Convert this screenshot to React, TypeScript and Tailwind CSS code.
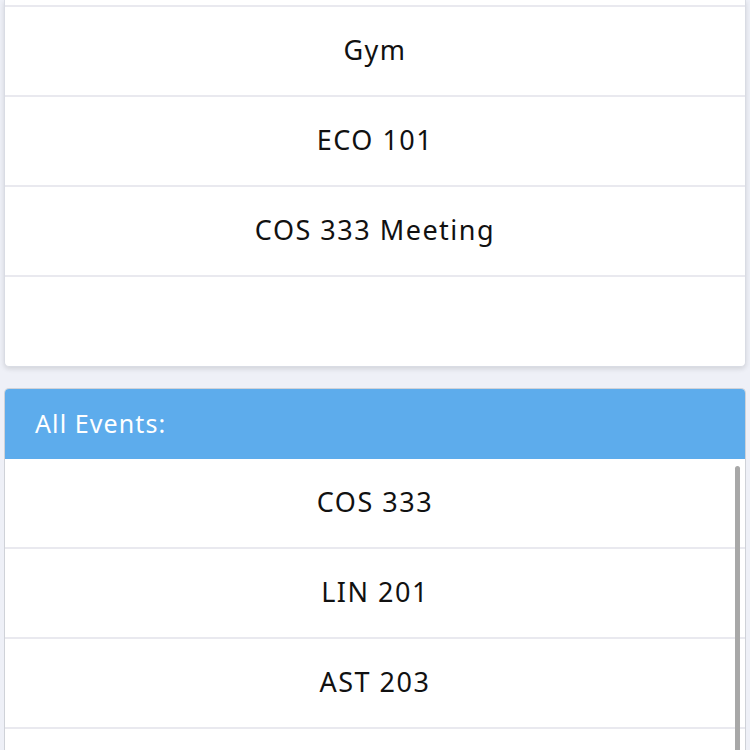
import React from "react";

const Row = ({ label }: { label: string }) => (
  <div className="h-[90px] border-b-2 border-[#e9e9ef] flex items-center justify-center pb-[1px] text-[27px] tracking-[1.5px] text-[#111]">
    {label}
  </div>
);

export default function App() {
  return (
    <div className="h-[750px] overflow-hidden bg-[#eef0f7] px-[4px] font-['Noto_Sans',sans-serif]">
      <div className="bg-white rounded-b-[5px] border-x border-b border-[#d9dce4] shadow-[0_2px_5px_rgba(0,0,0,0.12)]">
        <div className="h-[7px] border-b-2 border-[#e9e9ef]" />
        <Row label="Gym" />
        <Row label="ECO 101" />
        <Row label="COS 333 Meeting" />
        <div className="h-[89px]" />
      </div>
      <div className="mt-[21px] relative bg-white rounded-t-[5px] border-x border-t border-[#cfd2d8]">
        <div className="h-[70px] bg-[#5dacec] rounded-t-[4px] flex items-center pl-[30px] pb-[1px] text-white text-[25px] tracking-[1.1px]">
          All Events:
        </div>
        <Row label="COS 333" />
        <Row label="LIN 201" />
        <Row label="AST 203" />
        <Row label="" />
        <div className="absolute right-[5px] top-[77px] w-[5px] h-[400px] rounded-t-full bg-[#a8a8a8]" />
      </div>
    </div>
  );
}
